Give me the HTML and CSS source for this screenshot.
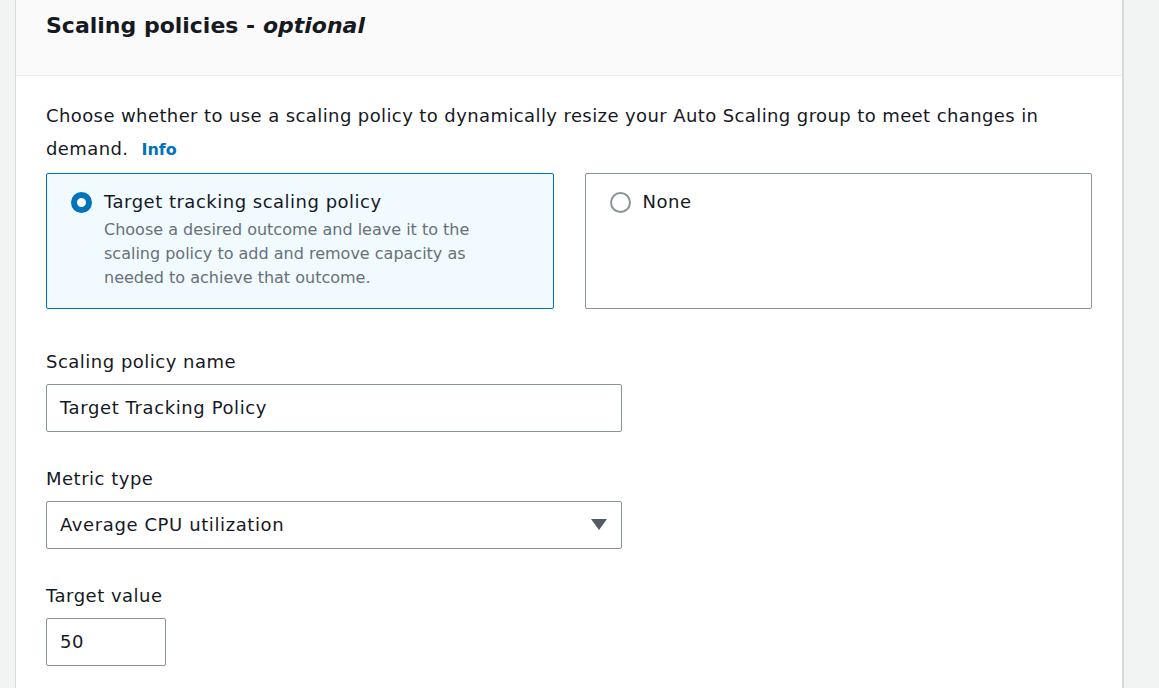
FILE: index.html
```html
<!DOCTYPE html>
<html>
<head>
<meta charset="utf-8">
<link rel="stylesheet" href="styles.css">
</head>
<body>
<div class="page">
  <div class="card">
    <div class="card-header">
      <h2 class="title">Scaling policies - <i>optional</i></h2>
    </div>
    <div class="card-body">
      <p class="desc">Choose whether to use a scaling policy to dynamically resize your Auto Scaling group to meet changes in demand.<a class="info">Info</a></p>
      <div class="tiles">
        <div class="tile selected">
          <span class="radio on"></span>
          <div class="tile-text">
            <div class="tile-title">Target tracking scaling policy</div>
            <div class="tile-desc">Choose a desired outcome and leave it to the scaling policy to add and remove capacity as needed to achieve that outcome.</div>
          </div>
        </div>
        <div class="tile">
          <span class="radio"></span>
          <div class="tile-text">
            <div class="tile-title">None</div>
          </div>
        </div>
      </div>
      <div class="field">
        <div class="label">Scaling policy name</div>
        <div class="input wide">Target Tracking Policy</div>
      </div>
      <div class="field">
        <div class="label">Metric type</div>
        <div class="input wide select">Average CPU utilization
          <svg class="caret" width="16" height="12" viewBox="0 0 16 12"><polygon points="0,0 16,0 8,11" fill="#545b64"/></svg>
        </div>
      </div>
      <div class="field">
        <div class="label">Target value</div>
        <div class="input small">50</div>
      </div>
    </div>
  </div>
</div>
</body>
</html>
```
FILE: styles.css
```css
* { box-sizing: border-box; }
html, body { margin: 0; padding: 0; }
body {
  background: #f2f3f3;
  font-family: "DejaVu Sans", "Open Sans", sans-serif;
  color: #16191f;
  width: 1159px;
  height: 688px;
  overflow: hidden;
}
.page { padding-left: 15px; }
.card {
  width: 1109px;
  background: #fff;
  border-left: 1px solid #d5dbdb;
  border-right: 2px solid #d5dbdb;
  height: 700px;
}
.card-header {
  background: #fafafa;
  height: 76px;
  border-bottom: 1px solid #eaeded;
  padding: 9px 30px 0;
}
.title {
  margin: 0;
  font-size: 22px;
  font-weight: 700;
  line-height: 34px;
}
.title i { font-weight: 700; }
.card-body { padding: 23px 30px 0; }
.desc {
  margin: 0;
  font-size: 18px;
  line-height: 33px;
  letter-spacing: 0.4px;
}
.info {
  display: inline-block;
  color: #0073bb;
  font-weight: 700;
  font-size: 16px;
  letter-spacing: 0;
  margin-left: 13px;
  line-height: 20px;
}
.tiles {
  display: flex;
  gap: 31px;
  margin-top: 8px;
}
.tile {
  width: 508px;
  height: 136px;
  border: 1px solid #879596;
  border-radius: 2px;
  display: flex;
  padding: 14px 24px 0 24px;
  gap: 12px;
}
.tile.selected {
  border-color: #0073bb;
  background: #f1faff;
}
.radio {
  flex: none;
  width: 21px;
  height: 21px;
  border-radius: 50%;
  border: 2px solid #879596;
  margin-top: 4px;
  background: #fff;
}
.radio.on {
  border: 6px solid #0073bb;
}
.tile-title {
  font-size: 18px;
  line-height: 28px;
  letter-spacing: 0.5px;
}
.tile-desc {
  font-size: 16px;
  line-height: 24px;
  color: #687078;
  margin-top: 2px;
}
.field { margin-top: 39px; }
.field + .field { margin-top: 33px; }
.label {
  font-size: 18px;
  line-height: 28px;
  margin-bottom: 8px;
  letter-spacing: 0.5px;
}
.input {
  height: 48px;
  border: 1px solid #879596;
  border-radius: 2px;
  font-size: 18px;
  line-height: 46px;
  padding: 0 13px;
  background: #fff;
  letter-spacing: 0.6px;
}
.wide { width: 576px; }
.small { width: 120px; }
.select {
  display: flex;
  justify-content: space-between;
  align-items: center;
  padding-right: 14px;
}
.caret { display: block; }
```
